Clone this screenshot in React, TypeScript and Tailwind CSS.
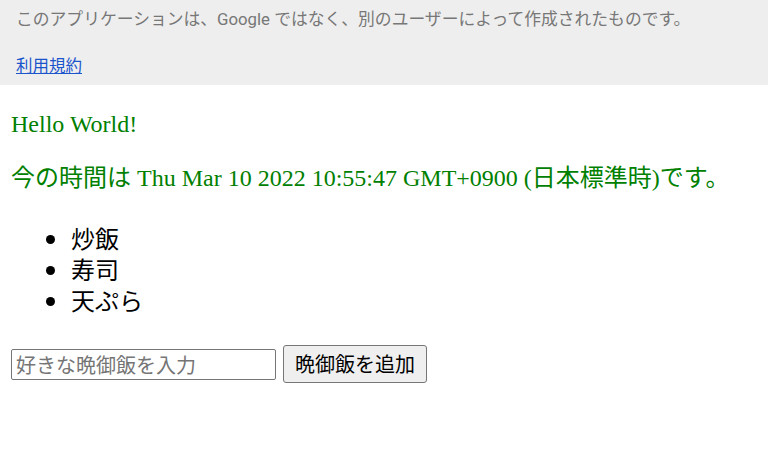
import React, { useState } from 'react';

const jp = "font-['Noto_Sans_CJK_JP',sans-serif]";

export default function App() {
  const [dinners, setDinners] = useState(['炒飯', '寿司', '天ぷら']);
  const [value, setValue] = useState('');

  return (
    <div className="min-h-[456px] bg-white">
      <div className="bg-[#eeeeee] h-[85px] px-4 pt-[7px] font-['Roboto','Noto_Sans_CJK_JP',sans-serif]">
        <p className="text-[16.8px] leading-[25px] text-[#777777] whitespace-nowrap">
          このアプリケーションは、Google ではなく、別のユーザーによって作成されたものです。
        </p>
        <a href="#" className={`${jp} block mt-[21px] text-[16.5px] leading-[24px] text-[#1a55cc] underline`}>
          利用規約
        </a>
      </div>

      <div className="px-[11px] text-[#008000] font-['Liberation_Serif','Noto_Sans_CJK_JP',serif]">
        <p className="mt-[25px] text-[24px] leading-[28px]">Hello World!</p>
        <p className="mt-[26px] text-[24px] leading-[28px] whitespace-nowrap">
          今の時間は Thu Mar 10 2022 10:55:47 GMT+0900 (日本標準時)です。
        </p>
      </div>

      <ul className={`${jp} mt-[30px] pl-[71px] list-disc text-[24px] leading-[31px] text-black`}>
        {dinners.map((d) => (
          <li key={d}>{d}</li>
        ))}
      </ul>

      <div className={`${jp} mt-[30px] px-[11px] flex items-center gap-[7px]`}>
        <input
          value={value}
          onChange={(e) => setValue(e.target.value)}
          placeholder="好きな晩御飯を入力"
          className="w-[265px] h-[31px] border border-[#767676] rounded-[2px] px-[4px] text-[20px] text-black placeholder:text-[#757575] outline-none"
        />
        <button
          onClick={() => {
            if (value) {
              setDinners([...dinners, value]);
              setValue('');
            }
          }}
          className="h-[38px] w-[144px] bg-[#efefef] border border-[#767676] rounded-[3px] text-[20px] text-black"
        >
          晩御飯を追加
        </button>
      </div>
    </div>
  );
}
